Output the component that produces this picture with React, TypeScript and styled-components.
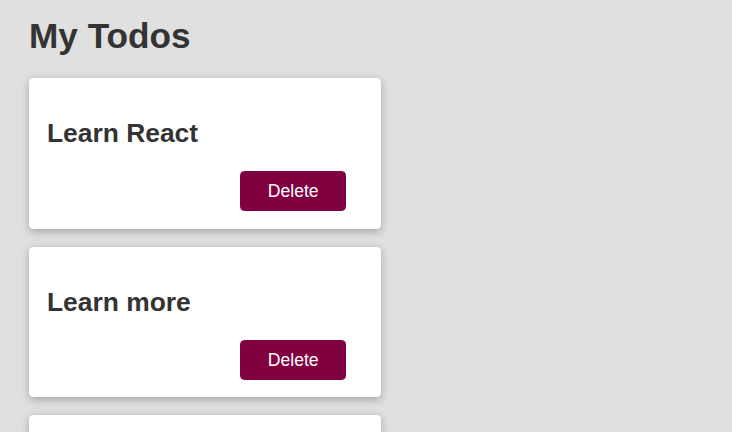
import React from "react";
import styled, { createGlobalStyle } from "styled-components";

const GlobalStyle = createGlobalStyle`
  html, body {
    margin: 0;
    padding: 0;
    background: #dfe0df;
    font-family: "Liberation Sans", Arial, sans-serif;
    color: #333333;
  }
`;

const Page = styled.div`
  padding: 15.5px 0 0 29px;
`;

const Title = styled.h1`
  margin: 0 0 22.5px;
  font-size: 35.2px;
  font-weight: bold;
  line-height: 40px;
`;

const List = styled.div`
  display: flex;
  flex-direction: column;
  gap: 18px;
`;

const Card = styled.div`
  box-sizing: border-box;
  width: 352px;
  padding: 18px 18px 17.5px;
  background: #ffffff;
  border-radius: 4.4px;
  box-shadow: 0 2.2px 8.8px rgba(0, 0, 0, 0.26);
`;

const CardTitle = styled.h2`
  margin: 22px 0 23px;
  font-size: 26.4px;
  font-weight: bold;
  line-height: 30px;
`;

const Actions = styled.div`
  display: flex;
  justify-content: flex-end;
  padding-right: 17px;
`;

const DeleteButton = styled.button`
  font: 17.6px "Liberation Sans", Arial, sans-serif;
  line-height: 20px;
  padding: 9px 26.4px;
  background: #800040;
  color: #ffffff;
  border: 1px solid #800040;
  border-radius: 4.4px;
  cursor: pointer;
`;

const todos = ["Learn React", "Learn more", "Master React"];

export default function App() {
  return (
    <>
      <GlobalStyle />
      <Page>
        <Title>My Todos</Title>
        <List>
          {todos.map((t) => (
            <Card key={t}>
              <CardTitle>{t}</CardTitle>
              <Actions>
                <DeleteButton>Delete</DeleteButton>
              </Actions>
            </Card>
          ))}
        </List>
      </Page>
    </>
  );
}
